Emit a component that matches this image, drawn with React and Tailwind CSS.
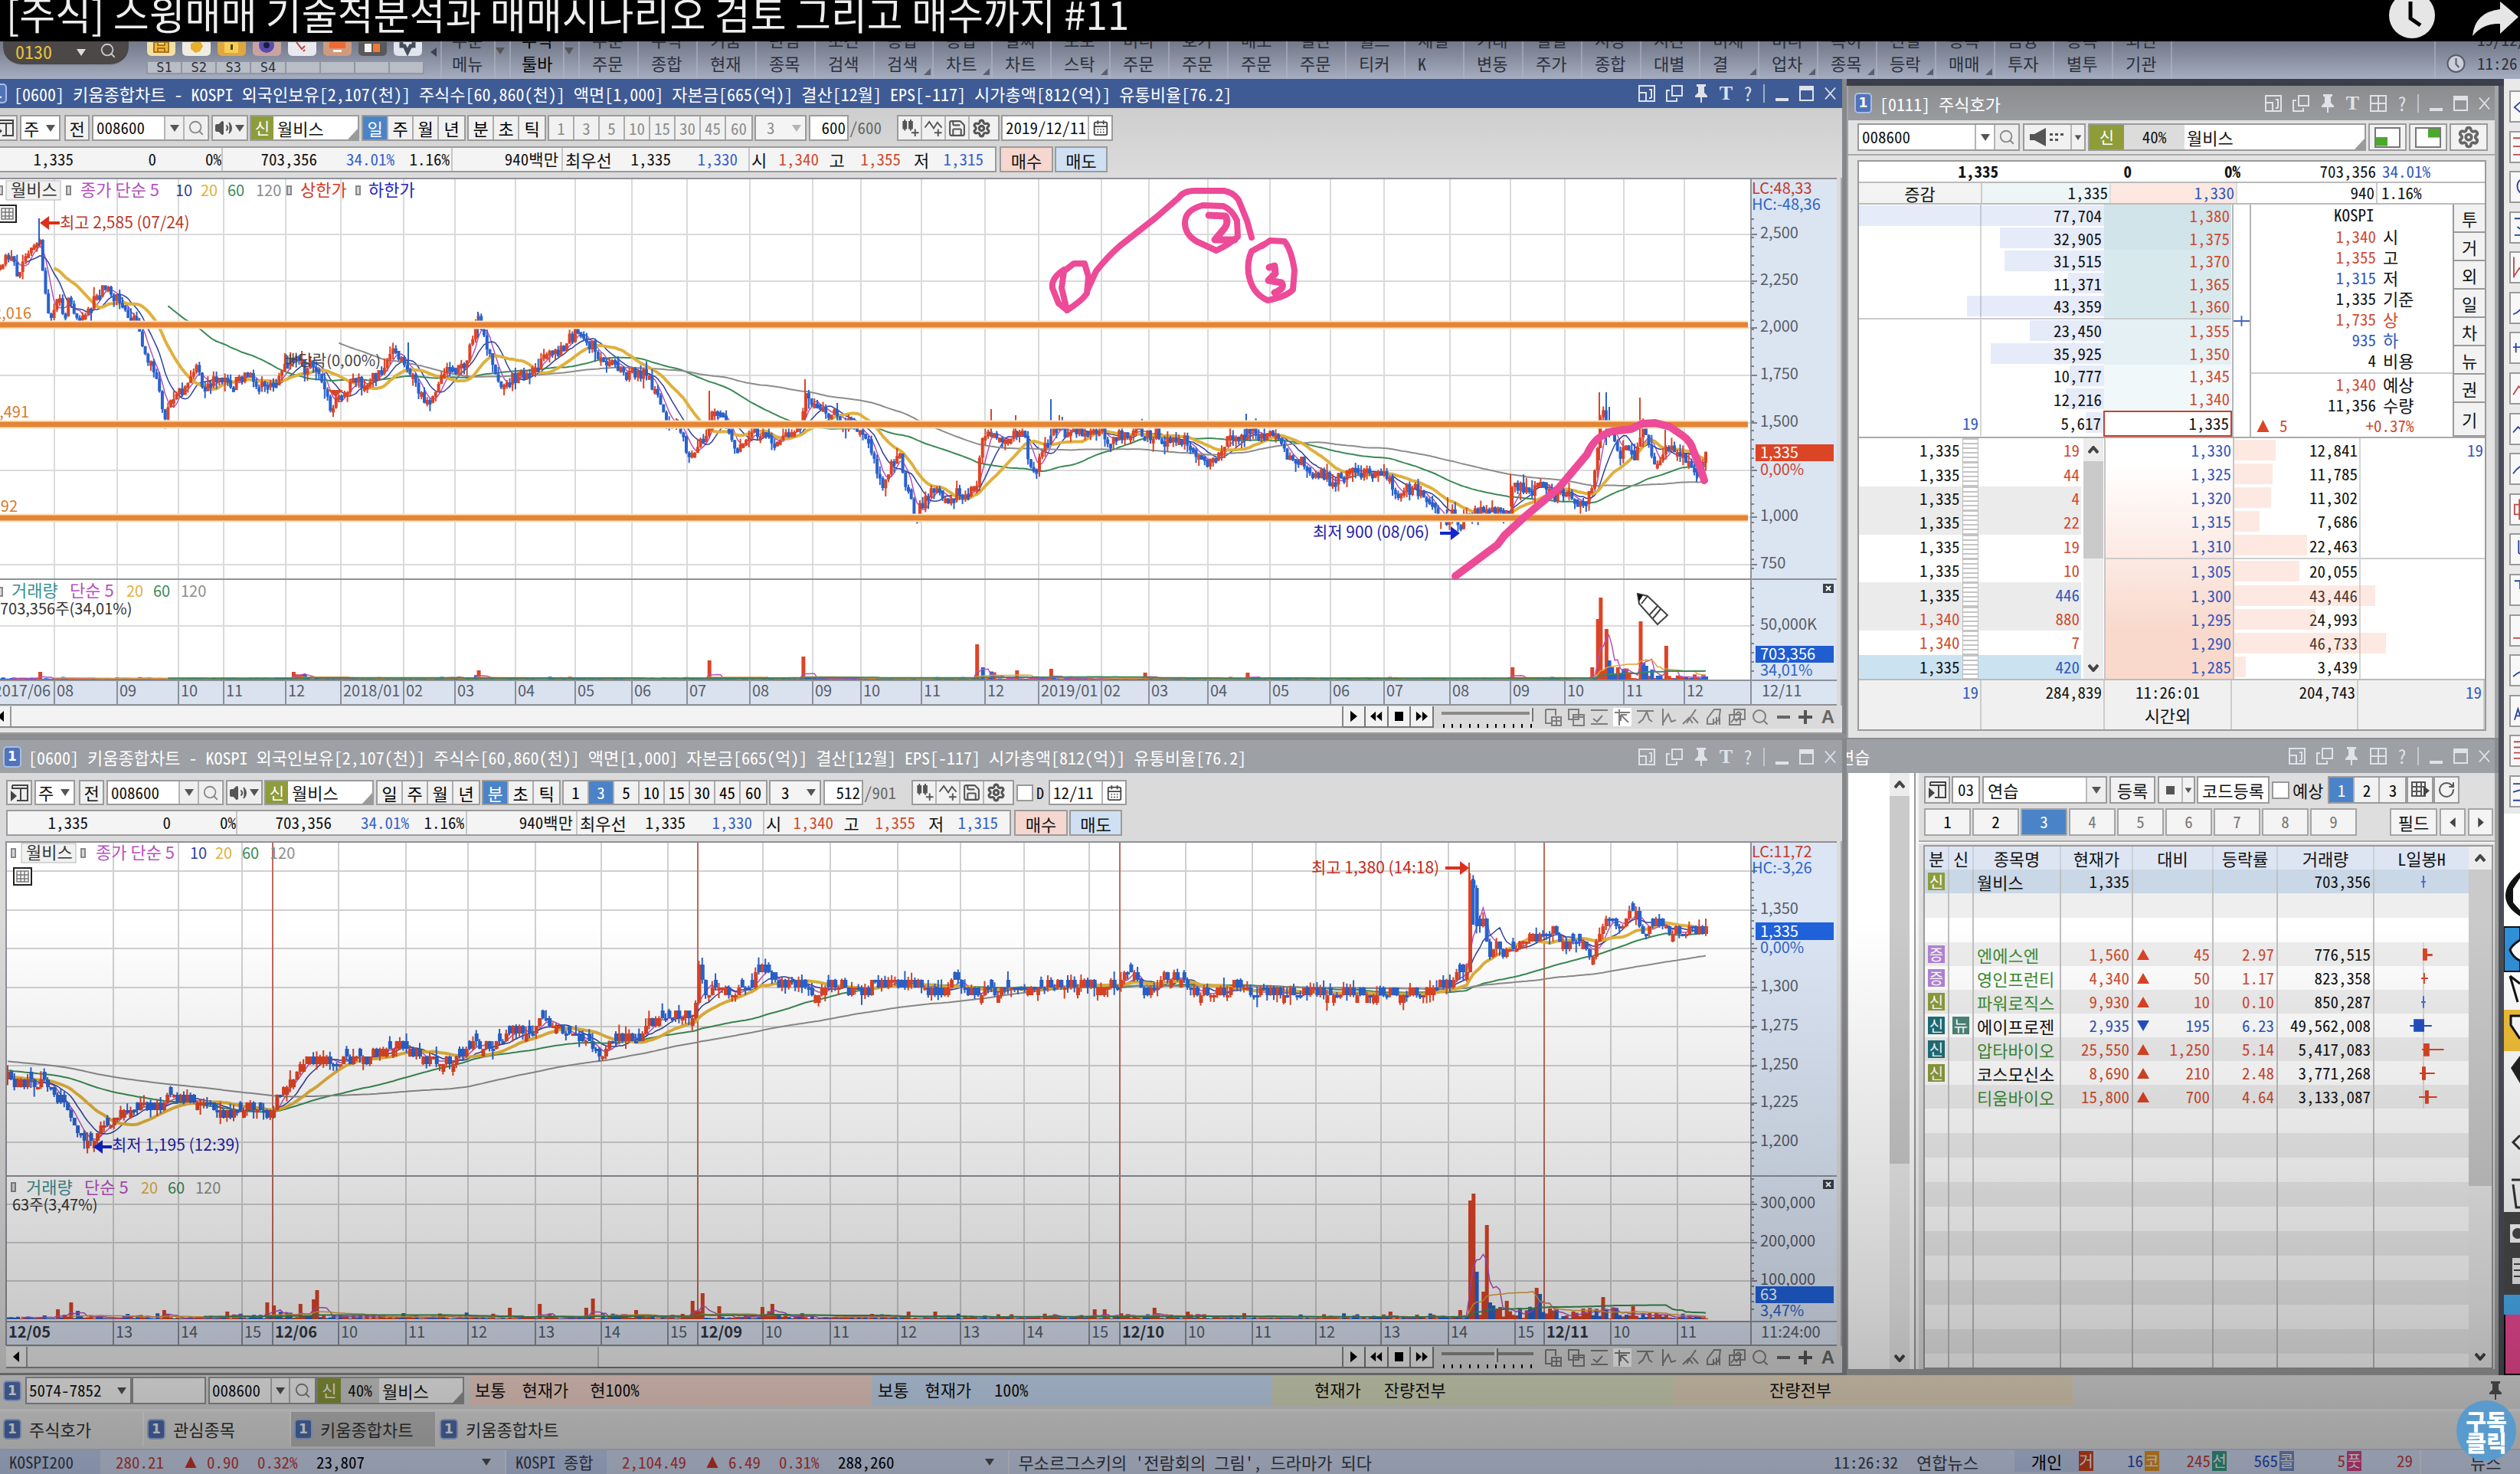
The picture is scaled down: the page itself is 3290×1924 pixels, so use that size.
import React from "react";
import { Search, Settings, Save, CalendarDays, RotateCw, Volume2 } from "lucide-react";

const MONO = "font-['Noto_Sans_Mono_CJK_KR','Noto_Sans_CJK_KR',monospace]";
const RED = "#dc4426";
const BLUE = "#2a62cc";

/* ---------- series helpers ---------- */

function rng(seed) {
  let s = seed;
  return () => {
    s = (s * 1664525 + 1013904223) % 4294967296;
    return s / 4294967296;
  };
}

function parse(str) {
  return str.trim().split(/\s+/).map((p) => p.split(",").map(Number));
}

function sample(points, x) {
  for (let i = 1; i < points.length; i++) {
    if (x <= points[i][0]) {
      const [x0, y0] = points[i - 1];
      const [x1, y1] = points[i];
      return y0 + ((y1 - y0) * (x - x0)) / (x1 - x0 || 1);
    }
  }
  return points[points.length - 1][1];
}

function average(values, n, i) {
  let sum = 0;
  for (let k = i - n + 1; k <= i; k++) sum += values[k];
  return sum / n;
}

function averageLine(values, n, lead, xs) {
  let d = "";
  for (let i = lead; i < values.length; i++) {
    if (i < n - 1) continue;
    d += (d ? "L" : "M") + xs(i - lead).toFixed(1) + " " + average(values, n, i).toFixed(1);
  }
  return d;
}

function buildPrice({ path, count, x0, x1, seed, noise, wick, tick, base, history }) {
  const pts = parse(path);
  const r = rng(seed);
  const step = (x1 - x0) / (count - 1);
  const xs = (i) => x0 + i * step;
  const snap = (y) => (tick ? base + Math.round((y - base) / tick) * tick : y);
  const closes = history.slice();
  const out = { redBody: "", blueBody: "", redWick: "", blueWick: "" };
  let prev = snap(sample(pts, x0));
  for (let i = 0; i < count; i++) {
    const x = xs(i);
    const close = snap(sample(pts, x) + (r() - 0.5) * noise);
    const up = close === prev ? r() > 0.5 : close < prev;
    let open = prev;
    if (tick && close === prev && r() > 0.45) open = up ? close + tick : close - tick;
    const top = Math.min(open, close);
    const h = Math.max(Math.abs(open - close), tick ? 3 : 6);
    const hi = top - r() * r() * wick;
    const lo = top + h + r() * r() * wick;
    out[up ? "redBody" : "blueBody"] += `M${(x - 2).toFixed(1)} ${top.toFixed(1)}h${tick ? 5 : 4}v${h.toFixed(1)}h-${tick ? 5 : 4}z`;
    out[up ? "redWick" : "blueWick"] += `M${x.toFixed(1)} ${hi.toFixed(1)}V${lo.toFixed(1)}`;
    closes.push(close);
    prev = close;
  }
  const lead = history.length;
  out.ma = (n) => averageLine(closes, n, lead, xs);
  return out;
}

function buildVolume({ count, x0, x1, seed, floor, small, peaks, busy }) {
  const r = rng(seed);
  const step = (x1 - x0) / (count - 1);
  const xs = (i) => x0 + i * step;
  const hs = [];
  let red = "";
  let blue = "";
  for (let i = 0; i < count; i++) {
    const x = xs(i);
    let h = r() * r() * small + 1;
    let isRed = r() > 0.5;
    busy.forEach(([a, b, m]) => {
      if (x >= a && x <= b) h = Math.max(h, r() * m);
    });
    peaks.forEach(([px, top, c]) => {
      if (Math.abs(px - x) <= step / 2) {
        h = floor - top;
        isRed = c !== "b";
      }
    });
    hs.push(floor - h);
    const bar = `M${(x - 2).toFixed(1)} ${floor}h5v${(-h).toFixed(1)}h-5z`;
    if (isRed) red += bar;
    else blue += bar;
  }
  return { red, blue, ma: (n) => averageLine(hs, n, 0, xs) };
}

/* ---------- chart data ---------- */

const DAILY = buildPrice({
  path: `0,350 8,325 22,355 40,330 48,318 51,302 54,345 60,390 68,415 75,385 85,410 92,385 102,420 115,400 125,390 137,375 150,385
  160,400 170,410 180,420 188,455 200,475 205,490 210,520 216,545 222,520 232,515 240,510 248,495 255,475 262,495 270,505 280,492
  290,495 305,500 320,485 335,500 350,505 365,490 380,470 388,455 398,480 410,470 420,490 430,530 440,520 450,505 465,495 480,500
  490,490 500,480 510,460 525,465 535,480 545,510 555,520 562,528 570,500 580,485 590,475 600,485 610,470 618,430 624,412 632,440
  640,470 650,500 655,508 665,495 680,490 700,475 715,465 730,455 745,440 757,432 765,450 775,445 785,470 800,475 815,490 830,485
  845,490 855,505 862,530 870,545 880,550 890,560 897,585 905,597 912,582 920,575 926,550 932,530 940,535 950,560 960,585 970,572
  980,568 990,560 1000,565 1010,575 1018,580 1025,565 1040,560 1047,550 1051,515 1060,530 1075,535 1090,540 1105,550 1115,560
  1125,555 1135,580 1145,610 1152,635 1160,615 1175,592 1185,640 1195,678 1200,665 1210,645 1220,635 1230,645 1238,650 1250,640
  1270,640 1277,625 1280,580 1290,562 1300,570 1312,580 1325,565 1335,562 1342,590 1350,618 1360,595 1370,570 1380,555 1395,565
  1410,560 1425,565 1435,560 1450,575 1470,565 1490,560 1500,570 1510,560 1520,575 1540,570 1555,580 1565,598 1577,602 1590,590
  1605,565 1620,570 1635,560 1650,570 1662,560 1672,570 1680,595 1690,590 1700,605 1715,620 1730,620 1740,630 1750,620 1760,615
  1775,617 1790,615 1805,620 1820,635 1835,640 1843,635 1855,645 1868,650 1878,668 1888,682 1895,668 1905,690 1912,675 1925,668
  1940,662 1955,665 1970,668 1975,635 1985,635 2000,640 2015,635 2030,645 2050,645 2062,658 2075,645 2080,640 2085,590 2090,540
  2098,545 2105,565 2115,595 2125,580 2135,600 2145,550 2155,590 2165,605 2175,590 2185,580 2195,595 2205,600 2213,622 2220,612 2227,590`,
  count: 600, x0: 0, x1: 2227, seed: 11, noise: 17, wick: 14, tick: 0, base: 0, history: [],
});

const DAILY_VOL = buildVolume({
  count: 600, x0: 0, x1: 2227, seed: 5, floor: 886, small: 3,
  peaks: [[51, 876], [384, 876], [624, 874], [925, 861], [1050, 856], [1277, 840], [1283, 870, "b"], [1326, 874], [1372, 872], [1495, 877],
    [1627, 877], [1973, 870], [2080, 870], [2084, 807], [2088, 779], [2097, 820], [2101, 861, "b"], [2112, 870], [2141, 810], [2145, 864, "b"], [2148, 868, "b"], [2174, 842]],
  busy: [[380, 400, 7], [612, 632, 7], [1277, 1300, 14], [2085, 2130, 16], [2140, 2160, 16], [2160, 2227, 7]],
});

const lead = Array.from({ length: 120 }, (_, i) => 1362 + (i * 48) / 119);

const MINUTE = buildPrice({
  path: `8,1404 23,1413 61,1416 73,1430 88,1445 96,1467 107,1482 121,1492 126,1485 134,1467 149,1469 165,1445 180,1441 207,1446 218,1435
  256,1437 268,1447 298,1456 314,1443 341,1448 356,1456 361,1430 375,1417 386,1397 398,1385 417,1382 436,1397 448,1385 482,1384
  505,1367 528,1367 540,1378 551,1382 574,1384 605,1378 616,1363 650,1367 662,1348 689,1348 712,1334 723,1345 746,1348 765,1358
  780,1378 792,1374 807,1355 834,1356 846,1334 865,1330 891,1330 907,1320 911,1256 917,1280 922,1300 934,1289 957,1295 980,1289
  995,1267 1004,1272 1014,1286 1033,1284 1064,1295 1087,1282 1125,1298 1148,1284 1194,1286 1219,1298 1246,1286 1293,1298 1316,1286
  1354,1293 1385,1286 1431,1286 1458,1287 1470,1274 1482,1276 1493,1298 1509,1289 1524,1274 1536,1276 1551,1289 1586,1298 1617,1288
  1648,1298 1694,1296 1748,1299 1817,1297 1860,1296 1879,1284 1898,1286 1906,1271 1915,1272 1917,1150 1923,1155 1928,1215 1938,1200
  1943,1252 1952,1230 1964,1245 1979,1237 1995,1223 2018,1221 2027,1212 2037,1226 2049,1237 2060,1223 2076,1249 2087,1223 2095,1195
  2107,1208 2118,1219 2126,1197 2134,1182 2140,1208 2147,1219 2157,1204 2168,1215 2222,1213 2227,1216`,
  count: 512, x0: 10, x1: 2227, seed: 29, noise: 12, wick: 14, tick: 10, base: 1290, history: lead,
});

const MINUTE_VOL = buildVolume({
  count: 512, x0: 10, x1: 2227, seed: 17, floor: 1723, small: 8,
  peaks: [[75, 1710], [93, 1701], [100, 1712, "b"], [214, 1711], [295, 1713], [348, 1701], [356, 1705], [392, 1703], [408, 1697], [413, 1685], [666, 1708],
    [704, 1703], [765, 1708], [774, 1696], [830, 1711], [903, 1699], [915, 1689], [939, 1706], [995, 1707], [1006, 1703], [1186, 1713], [1220, 1713],
    [1429, 1710], [1441, 1710], [1505, 1708], [1549, 1713], [1622, 1715], [1813, 1713], [1848, 1717], [1904, 1711], [1918, 1568], [1922, 1559],
    [1927, 1661, "b"], [1936, 1687], [1939, 1600], [1945, 1701, "b"], [1949, 1705, "b"], [1966, 1699], [2004, 1682], [2009, 1690, "b"], [2091, 1694], [2130, 1706]],
  busy: [[355, 385, 14], [905, 925, 14], [1000, 1025, 14], [1455, 1475, 10], [1930, 1960, 26], [1960, 2110, 19], [2110, 2200, 9]],
});

const D_GRID = [
  [71, "08"], [153, "09"], [233, "10"], [292, "11"], [373, "12"], [445, "2018/01"], [527, "02"], [594, "03"], [673, "04"], [751, "05"],
  [825, "06"], [897, "07"], [979, "08"], [1061, "09"], [1124, "10"], [1203, "11"], [1286, "12"], [1356, "2019/01"], [1438, "02"],
  [1500, "03"], [1577, "04"], [1658, "05"], [1737, "06"], [1807, "07"], [1893, "08"], [1972, "09"], [2043, "10"], [2120, "11"], [2199, "12"],
];
const M_GRID = [
  [8, "12/05", 2], [148, "13"], [233, "14"], [316, "15"], [356, "12/06", 1], [442, "10"], [530, "11"], [611, "12"], [699, "13"], [785, "14"],
  [872, "15"], [911, "12/09", 1], [996, "10"], [1084, "11"], [1172, "12"], [1254, "13"], [1337, "14"], [1422, "15"], [1462, "12/10", 1],
  [1548, "10"], [1635, "11"], [1718, "12"], [1803, "13"], [1891, "14"], [1978, "15"], [2016, "12/11", 1], [2103, "10"], [2190, "11"],
];

const AXIS = "#565c66";

function Averages({ src }) {
  return (
    <g fill="none">
      <path d={src.ma(5)} stroke="#b64fc0" strokeWidth="1.5" />
      <path d={src.ma(10)} stroke="#2e3f97" strokeWidth="1.5" />
      <path d={src.ma(60)} stroke="#3b8a55" strokeWidth="2" />
      <path d={src.ma(120)} stroke="#8c8c8c" strokeWidth="2" />
      <path d={src.ma(20)} stroke="#e0b03c" strokeWidth="4" />
    </g>
  );
}

function Candles({ src }) {
  return (
    <g>
      <path d={src.redWick} stroke={RED} strokeWidth="2" />
      <path d={src.blueWick} stroke={BLUE} strokeWidth="2" />
      <path d={src.redBody} fill={RED} />
      <path d={src.blueBody} fill={BLUE} />
    </g>
  );
}

function VolumeBars({ src }) {
  return (
    <g>
      <path d={src.red} fill={RED} />
      <path d={src.blue} fill={BLUE} />
      <g fill="none" strokeWidth="1.5">
        <path d={src.ma(5)} stroke="#b64fc0" />
        <path d={src.ma(20)} stroke="#e0a03c" />
        <path d={src.ma(60)} stroke="#3b8a55" strokeWidth="2" />
      </g>
    </g>
  );
}

function YTicks({ from, to, step }) {
  const d = [];
  for (let y = from; y < to; y += step) d.push(`M2286 ${y}h4`);
  return <path d={d.join("")} stroke="#7c828c" strokeWidth="2" />;
}

function Legend({ y, items }) {
  return items.map(([x, t, c]) => (
    <text key={x} x={x} y={y} fill={c} className={/[가-힣]/.test(t) ? "text-[22px]" : "text-[20px]"}>{t}</text>
  ));
}

function TinyMark({ x, y }) {
  return <rect x={x} y={y} width="5" height="11" fill="#d8d8d8" stroke="#888" strokeWidth="2" />;
}

function GridButton({ x, y }) {
  return (
    <g>
      <rect x={x} y={y} width="23" height="22" fill="#fff" stroke="#222" strokeWidth="2" />
      <path d={`M${x + 4} ${y + 4}h15v14h-15zM${x + 4} ${y + 9}h15M${x + 4} ${y + 14}h15M${x + 9} ${y + 4}v14M${x + 14} ${y + 4}v14`} fill="none" stroke="#777" strokeWidth="1.5" />
    </g>
  );
}

function CloseMark({ y }) {
  return (
    <g>
      <rect x="2380" y={y} width="14" height="12" fill="#3a3f48" />
      <path d={`M2384 ${y + 3}l6 6m0-6l-6 6`} stroke="#fff" strokeWidth="2" />
    </g>
  );
}

const CHART_TEXT = "block h-auto w-full text-[20px] font-['Noto_Sans_CJK_KR',sans-serif]";

function DailyChart() {
  const hs = [[305, "2,500"], [366, "2,250"], [427, "2,000"], [489, "1,750"], [551, "1,500"], [613, ""], [674, "1,000"], [736, "750"]];
  return (
    <svg viewBox="0 231 2398 689" className={CHART_TEXT} role="img" aria-label="월비스 일봉 차트">
      <rect x="0" y="231" width="2286" height="656" fill="#fff" />
      <rect x="2286" y="231" width="112" height="688" fill="#dbe4f1" />
      <rect x="0" y="887" width="2286" height="32" fill="#dae2ef" />
      <path d={D_GRID.map(([x]) => `M${x} 232V887`).join("") + hs.map(([y]) => `M0 ${y}H2285`).join("") + "M0 816H2285"} stroke="#dadada" strokeWidth="2" />
      <path d={D_GRID.map(([x]) => `M${x} 887V919`).join("")} stroke="#8b909a" strokeWidth="2" />
      <Averages src={DAILY} />
      <Candles src={DAILY} />
      <g strokeWidth="2">
        <path d="M1051 494V560M926 509V560M1294 533V570M1326 541V570M2088 511V600M2141 518V580M1972 618V660M2174 560V590M1890 648V668M883 545V560" stroke={RED} />
        <path d="M51 284V320M1372 520V580M1627 539V570M2097 511V580M2101 530V570M624 406V440M533 446V480M2215 610V628" stroke={BLUE} />
      </g>
      <path d="M0 423H2282M0 553H2282M0 675H2282" stroke="#fbe3bd" strokeWidth="11" />
      <path d="M0 423H2282M0 553H2282M0 675H2282" stroke="#e58435" strokeWidth="7" />
      <VolumeBars src={DAILY_VOL} />
      <path d="M0 232H2398M0 755H2398M0 887H2398M0 919H2398M2286 231V919" stroke="#8e9198" strokeWidth="2" fill="none" />
      <YTicks from={285} to={750} step={12} />
      <YTicks from={767} to={880} step={12} />
      <g fill={AXIS}>
        {hs.map(([y, t]) => (
          <text key={y} x="2298" y={y + 5}>{t}</text>
        ))}
        <path d={hs.map(([y]) => `M2286 ${y}h8`).join("")} stroke="#7c828c" strokeWidth="2" />
        <text x="2298" y="821">50,000K</text>
        {D_GRID.map(([x, t]) => (
          <text key={x} x={x + 3} y="908">{t}</text>
        ))}
        <text x="66" y="908" textAnchor="end">2017/06</text>
        <text x="2300" y="908">12/11</text>
      </g>
      <text x="2287" y="252" fill="#c23a2b">LC:48,33</text>
      <text x="2287" y="273" fill="#2f64c4">HC:-48,36</text>
      <rect x="2292" y="579" width="102" height="22" fill="#dc4426" />
      <text x="2298" y="597" fill="#fff">1,335</text>
      <text x="2298" y="619" fill="#c9432f">0,00%</text>
      <rect x="2292" y="842" width="102" height="22" fill="#1f5dd0" />
      <text x="2298" y="860" fill="#fff">703,356</text>
      <text x="2298" y="881" fill="#2f64c4">34,01%</text>
      <CloseMark y={761} />
      <rect x="8" y="235" width="71" height="25" fill="#f1f1f1" stroke="#b5b5b5" />
      <Legend y={255} items={[[14, "월비스", "#333"], [105, "종가 단순 5", "#b64fc0"], [229, "10", "#2e3f97"], [262, "20", "#e0b03c"], [297, "60", "#3b8a55"], [334, "120", "#8c8c8c"], [392, "상한가", "#d23a28"], [481, "하한가", "#2626b8"]]} />
      <TinyMark x={-2} y={242} />
      <TinyMark x={87} y={242} />
      <TinyMark x={375} y={242} />
      <TinyMark x={465} y={242} />
      <GridButton x={-2} y={267} />
      <path d="M52 290l12-9v7h14v4h-14v7z" fill="#dc2f1c" />
      <text x="78" y="297" fill="#b8392c" className="text-[21px]">최고 2,585 (07/24)</text>
      <text x="1714" y="701" fill="#2020b0" className="text-[21px]">최저 900 (08/06)</text>
      <path d="M1906 695l-12-9v7h-14v4h14v7z" fill="#1226cc" />
      <text x="371" y="477" fill="#444">배당락(0,00%)</text>
      <path d="M428 508h20l-10 9z" fill={RED} />
      <g fill="#d9792e">
        <text x="41" y="415" textAnchor="end">2,016</text>
        <text x="38" y="544" textAnchor="end">1,491</text>
        <text x="23" y="667" textAnchor="end">992</text>
      </g>
      <Legend y={778} items={[[15, "거래량", "#3a8f96"], [91, "단순 5", "#b64fc0"], [165, "20", "#e0b03c"], [200, "60", "#3b8a55"], [236, "120", "#8c8c8c"]]} />
      <TinyMark x={-2} y={766} />
      <text x="0" y="801" fill="#333">703,356주(34,01%)</text>
      <g fill="none" stroke="#ed4a97" strokeWidth="8" strokeLinecap="round" strokeLinejoin="round">
        <path d="M1389 351Q1372 362 1374 375L1382 395L1393 404Q1412 392 1419 382L1421 360L1416 343L1402 343L1389 353L1386 375L1393 404" />
        <path d="M1420 377L1431 353Q1445 335 1462 320L1509 283L1539 257Q1545 248 1560 248L1598 248Q1610 250 1617 260L1628 287L1634 309" />
        <path d="M1597 268L1570 267Q1547 273 1547 290Q1547 305 1562 314L1588 326Q1605 318 1616 308L1615 287Q1608 272 1597 268" />
        <path d="M1578 280L1600 281Q1605 290 1597 299L1586 312L1612 312" strokeWidth="9" />
        <path d="M1650 318L1634 327Q1628 340 1630 356Q1634 382 1655 391Q1680 386 1688 377L1690 352Q1686 325 1677 314L1658 313L1648 320" />
        <path d="M1657 348L1664 346L1665 356L1656 365L1673 368Q1678 376 1664 381" strokeWidth="9" />
        <path d="M1900 751L1927 731L1955 710L1964 698L1990 674L2035 636L2072 592Q2082 568 2105 562L2130 559L2144 552L2161 551L2180 556L2196 567Q2208 575 2211 588L2219 607L2225 626" strokeWidth="10" />
      </g>
      <path d="M2138 774l13 3l26 25l-13 12l-24-27zM2151 777l-8 10M2164 790l-10 11M2168 794l-10 12M2177 802l-13 12" fill="#fff" stroke="#444" strokeWidth="2" />
      <path d="M2138 774l7 2l-5 8z" fill="#111" />
    </svg>
  );
}

function MinuteChart() {
  const hs = [[1138, ""], [1189, "1,350"], [1239, ""], [1290, "1,300"], [1341, "1,275"], [1392, "1,250"], [1441, "1,225"], [1492, "1,200"]];
  const vs = [[1573, "300,000"], [1623, "200,000"], [1673, "100,000"]];
  return (
    <svg viewBox="0 1099 2398 659" className={CHART_TEXT} role="img" aria-label="월비스 3분봉 차트">
      <rect x="8" y="1099" width="2278" height="627" fill="#fff" />
      <rect x="2286" y="1099" width="112" height="659" fill="#dbe5f4" />
      <rect x="8" y="1726" width="2278" height="32" fill="#dbe4f4" />
      <path
        d={M_GRID.filter((g) => !g[2]).map(([x]) => `M${x} 1100V1726`).join("") + hs.concat(vs).map(([y]) => `M8 ${y}H2285`).join("")}
        stroke="#d0d0d0" strokeWidth="2" />
      <path d={M_GRID.map(([x]) => `M${x} 1726V1757`).join("")} stroke="#8b909a" strokeWidth="2" />
      <path d={M_GRID.filter((g) => g[2] === 1).map(([x]) => `M${x} 1100V1723`).join("")} stroke="#bf6a5c" strokeWidth="2" />
      <Averages src={MINUTE} />
      <Candles src={MINUTE} />
      <path d="M1918 1127V1160" stroke={RED} strokeWidth="2" />
      <path d="M1921 1148h4v60h-4z" fill={BLUE} />
      <VolumeBars src={MINUTE_VOL} />
      <path d="M8 1757V1100H2398M8 1536H2398M8 1726H2398M8 1757H2398M2286 1100V1757" stroke="#8e9198" strokeWidth="2" fill="none" />
      <YTicks from={1153} to={1530} step={10} />
      <YTicks from={1540} to={1720} step={10} />
      <g fill={AXIS}>
        {hs.map(([y, t]) => (
          <text key={y} x="2298" y={y + 5}>{t}</text>
        ))}
        {vs.map(([y, t]) => (
          <text key={y} x="2298" y={y + 5}>{t}</text>
        ))}
        <path d={hs.concat(vs).map(([y]) => `M2286 ${y}h8`).join("")} stroke="#7c828c" strokeWidth="2" />
        {M_GRID.map(([x, t, b]) => (
          <text key={x} x={x + 3} y="1747" className={b ? "font-bold" : "font-normal"} fill={b ? "#33373f" : AXIS}>{t}</text>
        ))}
        <text x="2299" y="1747">11:24:00</text>
      </g>
      <text x="2287" y="1120" fill="#c23a2b">LC:11,72</text>
      <text x="2287" y="1141" fill="#2f64c4">HC:-3,26</text>
      <rect x="2292" y="1205" width="102" height="23" fill="#1f62da" />
      <text x="2298" y="1224" fill="#fff">1,335</text>
      <text x="2298" y="1245" fill="#2f64c4">0,00%</text>
      <rect x="2292" y="1680" width="102" height="22" fill="#1f62da" />
      <text x="2298" y="1698" fill="#fff">63</text>
      <text x="2298" y="1719" fill="#2f64c4">3,47%</text>
      <CloseMark y={1541} />
      <rect x="28" y="1102" width="71" height="25" fill="#f1f1f1" stroke="#b5b5b5" />
      <Legend y={1122} items={[[34, "월비스", "#333"], [125, "종가 단순 5", "#b64fc0"], [248, "10", "#2e3f97"], [281, "20", "#e0b03c"], [316, "60", "#3b8a55"], [352, "120", "#8c8c8c"]]} />
      <TinyMark x={15} y={1109} />
      <TinyMark x={106} y={1109} />
      <GridButton x={18} y={1134} />
      <path d="M1918 1134l-12-9v7h-19v4h19v7z" fill="#dc2f1c" />
      <text x="1712" y="1141" fill="#c22a1c" className="text-[21px]">최고 1,380 (14:18)</text>
      <text x="146" y="1503" fill="#2020b0" className="text-[21px]">최저 1,195 (12:39)</text>
      <path d="M122 1498l12-9v7h12v4h-12v7z" fill="#1226cc" />
      <Legend y={1559} items={[[34, "거래량", "#3a8f96"], [110, "단순 5", "#b64fc0"], [184, "20", "#e0b03c"], [219, "60", "#3b8a55"], [255, "120", "#8c8c8c"]]} />
      <TinyMark x={15} y={1545} />
      <text x="16" y="1581" fill="#333">63주(3,47%)</text>
    </svg>
  );
}

/* ---------- small shared parts ---------- */

function Tri({ className = "" }) {
  return (
    <svg viewBox="0 0 12 9" className={"h-[9px] w-[12px] shrink-0 " + className}>
      <path d="M0 0h12l-6 9z" fill="#555" />
    </svg>
  );
}

function Corner() {
  return <span className="ml-auto h-0 w-0 self-end border-b-[14px] border-l-[13px] border-b-[#9a9a9a] border-l-transparent" />;
}

function Badge({ className = "" }) {
  return (
    <span className={"flex shrink-0 items-center justify-center rounded-[5px] border-2 border-[#a8bde8] bg-[#5173b8] font-['DejaVu_Sans',sans-serif] text-[17px] font-bold leading-none text-white " + className}>1</span>
  );
}

function Pin({ fill = "#d9dde6" }) {
  return (
    <svg viewBox="0 0 20 26" className="h-[26px] w-[20px]">
      <path d="M4 1h12v3h-2v8l4 4v2h-7v7h-2v-7H2v-2l4-4V4H4z" fill={fill} />
    </svg>
  );
}

function WinIcons({ t, grid }) {
  const c = "shrink-0 cursor-pointer";
  return (
    <div className="flex shrink-0 items-center gap-[14px] text-[#dfe2e8]">
      <button aria-label="크기" className={c}>
        <svg viewBox="0 0 22 22" className="h-[22px] w-[22px]" fill="none" stroke="currentColor" strokeWidth="2"><path d="M1 1h20v20H1zM1 10h9v11M14 6h3v11M14 17h3" /></svg>
      </button>
      <button aria-label="복사" className={c}>
        <svg viewBox="0 0 22 22" className="h-[22px] w-[22px]" fill="none" stroke="currentColor" strokeWidth="2"><path d="M8 1h13v13H8zM5 7H1v14h13v-4" /></svg>
      </button>
      <button aria-label="고정" className={c}><Pin fill="#dfe2e8" /></button>
      {t && <button aria-label="글꼴" className={c + " font-['Liberation_Serif',serif] text-[26px] font-bold leading-none"}>T</button>}
      {grid && (
        <button aria-label="배열" className={c}>
          <svg viewBox="0 0 22 22" className="h-[22px] w-[22px]" fill="none" stroke="currentColor" strokeWidth="2"><path d="M1 1h20v20H1zM11 1v20M1 11h20" /></svg>
        </button>
      )}
      <button aria-label="도움말" className={c + " text-[24px] leading-none"}>?</button>
      <span className="h-[24px] w-[2px] bg-current opacity-60" />
      <button aria-label="최소화" className={c + " mt-[16px] h-[4px] w-[17px] bg-current"} />
      <button aria-label="최대화" className={c + " h-[20px] w-[19px] border-2 border-t-[6px] border-current"} />
      <button aria-label="닫기" className={c}>
        <svg viewBox="0 0 16 18" className="h-[18px] w-[15px]" stroke="currentColor" strokeWidth="2"><path d="M1 1l14 16M15 1L1 17" /></svg>
      </button>
    </div>
  );
}

function Box({ className = "", children }) {
  return <div className={"flex shrink-0 items-center border-2 border-[#9b9b9b] " + className}>{children}</div>;
}

function Seg({ items, active, off, width }) {
  return (
    <Box className="h-full divide-x-2 divide-[#ababab] bg-[#f1f1f1]">
      {items.map((t) => (
        <button
          key={t}
          className={width + " h-full text-center leading-none " + (t === active ? "bg-[#4b83c8] text-white" : off ? "text-[#8d8d8d]" : "text-black")}>
          {t}
        </button>
      ))}
    </Box>
  );
}

const TOOL = "flex w-[31px] shrink-0 items-center justify-center self-stretch";

function ChartToolbar({ unit, tick, count, total, date, daily }) {
  return (
    <div className={"flex items-stretch " + (daily ? "h-[34px]" : "h-[33px]")}>
      <Box className="w-[34px] justify-center bg-[#eee]">
        <svg viewBox="0 0 24 24" className="h-[24px] w-[24px]" fill="none" stroke="#444" strokeWidth="2"><path d="M3 2h20v20H9M3 2v5M3 6h20M14 6v16" /><path d="M1 9l8 7l-8 7z" fill="#444" stroke="none" /></svg>
      </Box>
      <Box className="ml-[3px] w-[53px] justify-between bg-white pl-[3px] pr-[5px] text-[22px]"><span>주</span><Tri /></Box>
      <Box className="ml-[5px] w-[33px] justify-center bg-[#f1f1f1] text-[22px]"><button>전</button></Box>
      <Box className="ml-[3px] w-[153px] bg-white">
        <input aria-label="종목코드" defaultValue="008600" className="w-[92px] min-w-0 bg-transparent pl-1 text-[21px] outline-none" />
        <span className="flex w-[25px] shrink-0 items-center justify-center self-stretch border-l-2 border-[#b5b5b5] bg-[#efefef]"><Tri /></span>
        <button aria-label="검색" className={TOOL + " border-l-2 border-[#b5b5b5] bg-[#efefef]"}><Search size={22} color="#8a8a8a" /></button>
      </Box>
      <Box className="ml-[3px] w-[48px] justify-between bg-[#efefef] pl-[2px] pr-[3px]"><Volume2 size={24} fill="#555" color="#555" /><Tri /></Box>
      <Box className="ml-[2px] w-[143px] bg-white">
        <span className="flex h-full w-[29px] items-center justify-center bg-[#8e9c3a] text-[21px] text-white">신</span>
        <span className="ml-[5px] text-[22px]">월비스</span>
        <Corner />
      </Box>
      <div className="ml-[3px] flex text-[22px]">
        <Seg items={["일", "주", "월", "년"]} active={unit} width="w-[33px]" />
        <div className="w-[2px]" />
        <Seg items={["분", "초", "틱"]} active={unit} width="w-[33px]" />
      </div>
      <div className="ml-[2px] flex text-[21px]">
        <Seg items={["1", "3", "5", "10", "15", "30", "45", "60"]} active={tick} off={daily} width="w-[33px]" />
      </div>
      <Box className={"ml-[2px] w-[68px] justify-between bg-[#f4f4f4] pl-[14px] pr-[5px] " + (daily ? "text-[#8d8d8d]" : "text-black")}><span>3</span><Tri className={daily ? "opacity-40" : ""} /></Box>
      <Box className="ml-[3px] w-[52px] bg-white">
        <input aria-label="조회 개수" defaultValue={count} className="w-full bg-transparent pr-[2px] text-right text-[21px] outline-none" />
      </Box>
      <span className="ml-[1px] flex w-[62px] items-center text-[21px] text-[#666]">/{total}</span>
      <Box className="w-[134px] divide-x-2 divide-[#b5b5b5] bg-[#f1f1f1] text-[#555]">
        <button aria-label="봉 추가" className={TOOL}>
          <svg viewBox="0 0 26 26" className="h-[25px] w-[26px]"><path d="M4 4h4v9H4zM12 4h4v9h-4zM6 1v15M14 1v15M20 14v10M15 19h10" fill="#666" stroke="#555" strokeWidth="2" /></svg>
        </button>
        <button aria-label="지표 추가" className={TOOL}>
          <svg viewBox="0 0 26 26" className="h-[25px] w-[26px]"><path d="M1 12l6-8l6 9l5-8l6 7M19 14v10M14 19h10" fill="none" stroke="#555" strokeWidth="2" /></svg>
        </button>
        <button aria-label="저장" className={TOOL}><Save size={25} /></button>
        <button aria-label="설정" className={TOOL}><Settings size={25} strokeWidth={3} /></button>
      </Box>
      {!daily && (
        <label className="ml-[3px] flex items-center gap-[4px] text-[20px]">
          <input type="checkbox" className="h-[22px] w-[22px] appearance-none border-2 border-[#999] bg-white" />D
        </label>
      )}
      <Box className={"bg-white " + (daily ? "ml-[2px] w-[146px]" : "ml-[6px] w-[102px]")}>
        <input aria-label="날짜" defaultValue={date} className="w-full min-w-0 bg-transparent pl-[4px] text-[21px] outline-none" />
        <button aria-label="달력" className={TOOL + " border-l-2 border-[#b5b5b5]"}><CalendarDays size={22} color="#444" /></button>
      </Box>
    </div>
  );
}

function InfoRow() {
  const sep = "border-r-2 border-[#c6c6c6]";
  const cells = [
    ["1,335", "w-[105px] justify-end"],
    ["0", "w-[108px] justify-end"],
    ["0%", "w-[87px] justify-end " + sep],
    ["703,356", "w-[123px] justify-end"],
    ["34.01%", "w-[101px] justify-end text-[#3760c6]"],
    ["1.16%", "w-[76px] justify-end pr-[2px] " + sep],
    ["940백만", "w-[144px] justify-end pr-[4px] " + sep],
    ["최우선", "w-[66px] pl-[3px] text-[22px]"],
    ["1,335", "w-[75px] justify-end"],
    ["1,330", "w-[103px] justify-end pr-[14px] text-[#3760c6] " + sep],
    ["시", "w-[30px] pl-[2px] text-[22px]"],
    ["1,340", "w-[60px] justify-end text-[#cf4a30]"],
    ["고", "w-[47px] justify-center text-[22px]"],
    ["1,355", "w-[60px] justify-end text-[#cf4a30]"],
    ["저", "w-[54px] justify-center text-[22px]"],
    ["1,315", "w-[54px] justify-end text-[#3760c6]"],
  ];
  return (
    <div className="flex h-[34px] items-stretch">
      <Box className="w-[1312px] bg-[#f4f4f4] text-[21px]">
        {cells.map(([t, c], i) => (
          <span key={i} className={"flex h-full shrink-0 items-center whitespace-nowrap " + c}>{t}</span>
        ))}
      </Box>
      <button className="ml-[4px] w-[70px] border-2 border-[#9b9b9b] bg-[#f5d7d0] text-[22px]">매수</button>
      <button className="ml-[2px] w-[69px] border-2 border-[#9b9b9b] bg-[#cfe0f2] text-[22px]">매도</button>
    </div>
  );
}

const TOOL_PATHS = [
  "M2 2h13v8M2 2v18h8M10 12h12v11H10zM16 12v11M10 17h12",
  "M2 2h13v13H2zM8 9h14v14H8zM8 12h14",
  "M1 3h22M1 21h22M4 14l5 4l7-8",
  "M2 6h20M8 2v21M10 9l10 10M10 9v8M10 9h8",
  "M1 4h22M3 20l6-5l5-10l3 10l4 3",
  "M5 1v22M5 20l7-12l4 10l6-2",
  "M1 21l8-8l5 7M6 20L18 2M14 12l7 8",
  "M3 14L12 2h8l-2 14l-8 5H3zM11 14v8M15 12v10M19 12v10",
  "M8 2h14v13H8zM2 9h14v13H2zM4 19l4-5l3 3l4-5M10 8l4-3l4 4",
];

function ChartFooter({ daily }) {
  const btn = "flex h-full w-[30px] items-center justify-center border-b-2 border-r-2 border-[#777] bg-[#f2f2f2]";
  return (
    <div className="flex h-[30px] items-center">
      <div className={"flex h-[28px] flex-1 items-stretch border-b-2 border-[#8b8b8b] " + (daily ? "bg-[#f3f3f3]" : "ml-[8px] bg-[#eeeeee]")}>
        <button aria-label="왼쪽" className={"flex items-center border-r-2 border-[#999] bg-[#f3f3f3] " + (daily ? "w-[15px]" : "w-[28px] justify-center")}>
          <svg viewBox="0 0 8 14" className={"h-[14px] w-[8px] " + (daily ? "-ml-[3px]" : "")}><path d="M8 0v14L0 7z" /></svg>
        </button>
        {!daily && <div className="ml-auto w-[972px] border-l-2 border-[#bbb] bg-[#f3f3f3] shadow-[0_2px_0_#777]" />}
      </div>
      <div className="flex h-[28px] w-[120px] border-l-2 border-[#888]">
        <button aria-label="재생" className={btn}><svg viewBox="0 0 10 16" className="h-[16px] w-[9px]"><path d="M0 0v16l10-8z" /></svg></button>
        <button aria-label="뒤로" className={btn}><svg viewBox="0 0 18 14" className="h-[14px] w-[16px]"><path d="M8 0v14L0 7zM17 0v14L9 7z" /></svg></button>
        <button aria-label="정지" className={btn}><span className="h-[12px] w-[11px] bg-black" /></button>
        <button aria-label="앞으로" className={btn}><svg viewBox="0 0 18 14" className="h-[14px] w-[16px]"><path d="M1 0v14l8-7zM10 0v14l8-7z" /></svg></button>
      </div>
      <div className="ml-[10px] flex w-[120px] flex-col gap-[2px]">
        <input
          type="range" aria-label="속도" defaultValue={daily ? 100 : 60}
          className="h-[20px] w-full appearance-none bg-[linear-gradient(#8a8a8a,#8a8a8a)] bg-[length:100%_4px] bg-[position:0_6px] bg-no-repeat [&::-webkit-slider-thumb]:h-[18px] [&::-webkit-slider-thumb]:w-[5px] [&::-webkit-slider-thumb]:appearance-none [&::-webkit-slider-thumb]:border-r-2 [&::-webkit-slider-thumb]:border-[#777] [&::-webkit-slider-thumb]:bg-[#e5e5e5]" />
        <div className="flex justify-between px-[2px]">
          {Array.from({ length: 11 }, (_, i) => <span key={i} className="h-[5px] w-[2px] bg-black" />)}
        </div>
      </div>
      <div className="ml-[14px] flex h-full items-center gap-[6px] text-[#7d7d7d]">
        {TOOL_PATHS.map((d, i) => (
          <button key={i} aria-label={"도구 " + (i + 1)} className={i === 3 ? "bg-white" : ""}>
            <svg viewBox="0 0 24 24" className="h-[24px] w-[24px]" fill="none" stroke="currentColor" strokeWidth="2"><path d={d} /></svg>
          </button>
        ))}
        <button aria-label="확대경"><Search size={24} /></button>
        <button aria-label="축소" className="ml-[4px] h-[4px] w-[17px] bg-[#666]" />
        <button aria-label="확대" className="ml-[4px]"><svg viewBox="0 0 20 20" className="h-[20px] w-[20px]" stroke="#555" strokeWidth="4"><path d="M10 1v18M1 10h18" /></svg></button>
        <button className="ml-[5px] mr-[10px] font-['Liberation_Sans',sans-serif] text-[24px] font-bold leading-none text-[#666]">A</button>
      </div>
    </div>
  );
}

const TITLE = "[0600] 키움종합차트 - KOSPI 외국인보유[2,107(천)] 주식수[60,860(천)] 액면[1,000] 자본금[665(억)] 결산[12월] EPS[-117] 시가총액[812(억)] 유통비율[76.2]";

function ChartWindow({ daily }) {
  return (
    <section className={"mr-[6px] overflow-hidden bg-[#dadada] " + (daily ? "" : "border-t-2 border-[#8a8c90]")}>
      <header className={"flex items-center pr-[8px] text-white " + (daily ? "h-[38px] bg-[#3f5b96]" : "h-[43px] bg-[#9da0a5]")}>
        <Badge className={daily ? "-ml-[15px] h-[26px] w-[24px]" : "ml-[4px] h-[28px] w-[24px]"} />
        <h2 className="ml-[9px] flex-1 whitespace-nowrap text-[22px] leading-none">{TITLE}</h2>
        <WinIcons t />
      </header>
      <div className={"flex flex-col pb-[7px] " + (daily ? "-ml-[11px] gap-[7px] bg-gradient-to-b from-[#cecece] to-[#dcdcdc] pt-[9px]" : "ml-[8px] gap-[6px] pt-[9px]")}>
        {daily ? (
          <ChartToolbar daily unit="일" count="600" total="600" date="2019/12/11" />
        ) : (
          <ChartToolbar unit="분" tick="3" count="512" total="901" date="12/11" />
        )}
        <InfoRow />
      </div>
      <div className="border-r-2 border-[#a9a9a9] pr-[5px]">{daily ? <DailyChart /> : <MinuteChart />}</div>
      <ChartFooter daily={daily} />
      <div className={daily ? "h-[7px] border-b-2 border-[#9a9a9a] bg-[#e6e6e6]" : "h-[5px]"} />
    </section>
  );
}

/* ---------- order book ---------- */

const ASKS = [
  [77704, "77,704", "1,380"], [32905, "32,905", "1,375"], [31515, "31,515", "1,370"], [11371, "11,371", "1,365"], [43359, "43,359", "1,360"],
  [23450, "23,450", "1,355"], [35925, "35,925", "1,350"], [10777, "10,777", "1,345"], [12216, "12,216", "1,340"], [5617, "5,617", "1,335"],
];
const BIDS = [
  [12841, "12,841", "1,330"], [11785, "11,785", "1,325"], [11302, "11,302", "1,320"], [7686, "7,686", "1,315"], [22463, "22,463", "1,310"],
  [20055, "20,055", "1,305"], [43446, "43,446", "1,300"], [24993, "24,993", "1,295"], [46733, "46,733", "1,290"], [3439, "3,439", "1,285"],
];
const TRADES = [
  ["1,335", "19", 1], ["1,335", "44", 1], ["1,335", "4", 1], ["1,335", "22", 1], ["1,335", "19", 1],
  ["1,335", "10", 1], ["1,335", "446", 0], ["1,340", "880", 1], ["1,340", "7", 1], ["1,335", "420", 0],
];
const STATS = [
  ["1,340", "시", "r"], ["1,355", "고", "r"], ["1,315", "저", "b"], ["1,335", "기준", "k"], ["1,735", "상", "R"], ["935", "하", "B"], ["4", "비용", "k"],
];
const vRed = "text-[#cf4a30]";
const vBlue = "text-[#3257bd]";

function Stat({ v, l, c }) {
  const red = c === "r" || c === "R";
  const blue = c === "b" || c === "B";
  return (
    <div className="flex h-[27px] items-center">
      <span className={"w-[163px] text-right " + (red ? vRed : blue ? vBlue : "")}>{v}</span>
      <span className={"ml-[9px] text-[22px] " + (c === "R" ? vRed : c === "B" ? vBlue : "")}>{l}</span>
    </div>
  );
}

function ScrollV({ width, thumb }) {
  return (
    <div className={"flex shrink-0 flex-col bg-[#ececec] " + width}>
      <svg viewBox="0 0 14 10" className="mx-auto my-[10px] h-[10px] w-[14px] shrink-0" fill="none" stroke="#444" strokeWidth="4"><path d="M1 9l6-7l6 7" /></svg>
      <div className={"shrink-0 bg-[#cacaca] " + thumb} />
      <svg viewBox="0 0 14 10" className="mx-auto mb-[9px] mt-auto h-[10px] w-[14px] shrink-0" fill="none" stroke="#444" strokeWidth="4"><path d="M1 1l6 7l6-7" /></svg>
    </div>
  );
}

function QuoteWindow() {
  return (
    <section className="border-t-[9px] border-[#3a3f4b]">
      <div className="mr-[7px] border-l-2 border-r-[5px] border-[#a4a5a8] bg-[#e2e2e2]">
        <header className="flex h-[45px] items-center bg-gradient-to-b from-[#8b8c8e] to-[#9a9b9e] pr-[6px] text-white">
          <Badge className="ml-[8px] h-[27px] w-[23px]" />
          <h2 className="ml-[10px] flex-1 text-[22px] leading-none">[0111] 주식호가</h2>
          <WinIcons t grid />
        </header>
        <div className="flex h-[46px] items-center border-b-2 border-[#aaa] py-[4px] pl-[12px] pr-[9px]">
          <Box className="h-[36px] w-[212px] bg-white">
            <input aria-label="종목코드" defaultValue="008600" className="min-w-0 flex-1 bg-transparent pl-[4px] text-[21px] outline-none" />
            <span className="flex w-[25px] items-center justify-center self-stretch border-l-2 border-[#b5b5b5]"><Tri /></span>
            <button aria-label="검색" className="flex w-[32px] items-center justify-center self-stretch border-l-2 border-[#b5b5b5] bg-[#eee]"><Search size={22} color="#888" /></button>
          </Box>
          <Box className="ml-[4px] h-[36px] w-[82px] justify-between bg-[#f1f1f1] pl-[6px]">
            <svg viewBox="0 0 46 24" className="h-[24px] w-[46px]" fill="#555"><path d="M1 8h6L22 0v24L7 16H1zM27 7h4v3h-4zM34 7h4v3h-4zM41 7h4v3h-4zM27 14h4v3h-4zM34 14h4v3h-4z" /></svg>
            <span className="flex w-[18px] items-center justify-center self-stretch border-l-2 border-[#b5b5b5]"><Tri className="scale-75" /></span>
          </Box>
          <Box className="ml-[3px] h-[36px] flex-1 bg-white">
            <span className="flex h-full w-[45px] items-center justify-center bg-[#8e9c3a] text-[21px] text-white">신</span>
            <span className="flex h-full w-[79px] items-center justify-center bg-[#dcdcdc]">40%</span>
            <span className="ml-[3px] text-[22px]">월비스</span>
            <Corner />
          </Box>
          {["bg-[linear-gradient(#4aa82c,#4aa82c)] bg-[length:50%_50%] bg-[position:0_100%] bg-no-repeat", "bg-[linear-gradient(#4aa82c,#4aa82c)] bg-[length:50%_50%] bg-[position:100%_0] bg-no-repeat"].map((g, i) => (
            <Box key={i} className="ml-[3px] h-[36px] w-[50px] justify-center bg-[#f2f2f2]">
              <button aria-label={"배치 " + (i + 1)} className={"h-[27px] w-[34px] border-2 border-[#777] bg-white " + g} />
            </Box>
          ))}
          <Box className="ml-[3px] h-[36px] w-[50px] justify-center bg-[#f2f2f2]"><button aria-label="설정"><Settings size={30} strokeWidth={3} color="#666" /></button></Box>
        </div>
        <div className="ml-[12px] mr-[11px] mt-[6px] border-2 border-[#9a9a9a] bg-white text-[21px]">
          <div className="flex h-[28px] items-center border-b-2 border-[#bbb]">
            <b className="w-[182px] text-right">1,335</b>
            <b className="w-[174px] text-right">0</b>
            <b className="w-[142px] text-right">0%</b>
            <span className="w-[177px] text-right">703,356</span>
            <span className={"ml-[8px] " + vBlue}>34.01%</span>
          </div>
          <div className="flex h-[28px] items-stretch border-b-2 border-[#bbb] [&>*]:flex [&>*]:items-center">
            <span className="w-[161px] justify-center border-r-2 border-[#ccc] bg-[#f3f3f3] text-[22px]">증감</span>
            <span className="w-[166px] justify-end bg-[#eef5f7] pr-[2px]">1,335</span>
            <span className={"w-[167px] justify-end border-x-2 border-[#ddd] bg-[#fce8e1] pr-[2px] " + vBlue}>1,330</span>
            <span className="w-[183px] justify-end border-r-2 border-[#ccc] pr-[2px]">940</span>
            <span className="pl-[5px]">1.16%</span>
          </div>
          <div className="flex h-[305px] border-b-2 border-[#aaa]">
            <table className="h-full w-[486px] shrink-0 table-fixed border-collapse">
              <colgroup><col className="w-[159px]" /><col className="w-[161px]" /><col className="w-[166px]" /></colgroup>
              <tbody>
                {ASKS.map(([n, q, p], i) => (
                  <tr key={p} className={i === 4 ? "border-b-2 border-[#ccc]" : ""}>
                    <td className={"border-r-2 border-[#d5d5d5] p-0 pr-[2px] text-right leading-none " + vBlue}>{i === 9 ? "19" : ""}</td>
                    <td className="relative p-0 text-right leading-none">
                      <span className="absolute right-0 top-[1px] h-[27px] bg-[#5a78dc]/15" style={{ width: Math.round(n * 0.00413) }} />
                      <span className="relative pr-[3px]">{q}</span>
                    </td>
                    <td className={"p-0 pr-[2px] text-right leading-none " + (i === 9 ? "border-2 border-[#c9402c] bg-white" : vRed + (i < 2 ? " bg-[#d0e4e9]" : i < 5 ? " bg-[#d8e9ed]" : i < 7 ? " bg-[#e4f0f3]" : " bg-[#f1f8fa]"))}>{p}</td>
                  </tr>
                ))}
              </tbody>
            </table>
            <div className="flex w-[25px] shrink-0 items-center justify-center border-x-2 border-[#b5b5b5]">
              <svg viewBox="0 0 22 14" className="h-[14px] w-[22px]" stroke="#4a63c0" strokeWidth="2"><path d="M0 7h22M11 0v14" /></svg>
            </div>
            <div className="flex flex-1 flex-col">
              <div className="flex h-[28px] items-center pl-[108px]">KOSPI</div>
              {STATS.map(([v, l, c]) => <Stat key={l} v={v} l={l} c={c} />)}
              <div className="mt-[2px] border-t-2 border-[#ccc]">
                <Stat v={<span className={vRed}>1,340</span>} l="예상" c="k" />
                <Stat v="11,356" l="수량" c="k" />
                <div className={"flex h-[27px] items-center pl-[7px] " + vRed}>
                  <svg viewBox="0 0 16 16" className="h-[16px] w-[17px]"><path d="M8 0l8 16H0z" fill={RED} /></svg>
                  <span className="ml-[13px]">5</span>
                  <span className="ml-[102px]">+0.37%</span>
                </div>
              </div>
            </div>
            <div className="flex w-[42px] shrink-0 flex-col border-l-2 border-[#999] text-[22px]">
              {["투", "거", "외", "일", "차", "뉴", "권", "기"].map((t) => (
                <button key={t} className={"w-full border-b-2 border-[#999] bg-[#f2f2f2] leading-none " + (t === "기" ? "flex-1 border-b-0" : "h-[37px]")}>{t}</button>
              ))}
            </div>
          </div>
          <div className="flex h-[316px] border-b-2 border-[#bbb]">
            <div className="flex w-[320px] shrink-0">
              <table className="h-full w-[290px] table-fixed border-collapse">
                <colgroup><col className="w-[135px]" /><col className="w-[20px]" /><col className="w-[135px]" /></colgroup>
                <tbody>
                  {TRADES.map(([p, q, up], i) => (
                    <tr key={i} className={i === 9 ? "bg-[#cbe3f1]" : i === 2 || i === 3 || i === 6 || i === 7 ? "bg-[#ebebeb]" : "bg-white"}>
                      <td className={"p-0 pr-[3px] text-right leading-none " + (p === "1,340" ? vRed : "")}>{p}</td>
                      <td className="border-x border-[#bbb] bg-white bg-[linear-gradient(#c4c4c4_2px,transparent_2px)] bg-[length:100%_6px] p-0" />
                      <td className={"p-0 pr-[2px] text-right leading-none " + (up ? vRed : vBlue)}>{q}</td>
                    </tr>
                  ))}
                </tbody>
              </table>
              <ScrollV width="ml-[3px] w-[26px]" thumb="h-[127px]" />
            </div>
            <table className="h-full flex-1 table-fixed border-collapse">
              <colgroup><col className="w-[168px]" /><col className="w-[165px]" /><col /></colgroup>
              <tbody className="bg-[linear-gradient(#fff_10%,#f9d9cc_80%)]">
                {BIDS.map(([n, q, p], i) => (
                  <tr key={p} className={i === 4 ? "border-b-2 border-[#ccc]" : ""}>
                    <td className={"border-x-2 border-[#c5c5c5] p-0 pr-[2px] text-right leading-none " + vBlue}>{p}</td>
                    <td className="relative border-r-2 border-[#d5d5d5] bg-white p-0 pr-[2px] text-right leading-none">
                      <span className="absolute left-0 top-[2px] z-10 h-[27px] bg-[#f6a68c]/25" style={{ width: Math.round(n * 0.00424) }} />
                      {q}
                    </td>
                    <td className={"bg-white p-0 pr-[2px] text-right leading-none " + vBlue}>{i === 0 ? "19" : ""}</td>
                  </tr>
                ))}
              </tbody>
            </table>
          </div>
          <div className="flex h-[64px] bg-[#f0f0f0] leading-[30px] [&>*]:border-r-2 [&>*]:border-[#ccc]">
            <span className={"w-[160px] pr-[2px] text-right " + vBlue}>19</span>
            <span className="w-[161px] pr-[2px] text-right">284,839</span>
            <span className="flex w-[166px] flex-col text-center">11:26:01<span className="text-[22px]">시간외</span></span>
            <span className="w-[165px] pr-[2px] text-right">204,743</span>
            <span className={"flex-1 border-r-0 pr-[2px] text-right " + vBlue}>19</span>
          </div>
        </div>
        <div className="h-[9px]" />
      </div>
    </section>
  );
}

/* ---------- watch list ---------- */

const OLIVE = "bg-[#8e9c3a]";
const PURPLE = "bg-[#b183d6]";
const TEAL = "bg-[#1f6f78]";
const WATCH = [
  [["신", OLIVE], "", "월비스", "k", "1,335", "", "", "", "703,356", "tiny"],
  null,
  null,
  [["증", PURPLE], "", "엔에스엔", "g", "1,560", "u", "45", "2.97", "776,515", "body"],
  [["증", PURPLE], "", "영인프런티", "g", "4,340", "u", "50", "1.17", "823,358", "cross"],
  [["신", OLIVE], "", "파워로직스", "g", "9,930", "u", "10", "0.10", "850,287", "tiny"],
  [["신", TEAL], "뉴", "에이프로젠", "k", "2,935", "d", "195", "6.23", "49,562,008", "down"],
  [["신", TEAL], "", "압타바이오", "g", "25,550", "u", "1,250", "5.14", "5,417,083", "long"],
  [["신", OLIVE], "", "코스모신소", "k", "8,690", "u", "210", "2.48", "3,771,268", "mid"],
  [null, "", "티움바이오", "g", "15,800", "u", "700", "4.64", "3,133,087", "mid2"],
];

function MiniCandle({ kind }) {
  const shapes = {
    tiny: <path d="M65 8v16M62 16h6" stroke="#4a6ed0" strokeWidth="2" />,
    body: <path d="M64 8h6v16h-6zM64 15h13v3H64z" fill={RED} />,
    cross: <path d="M66 9v14M62 16h9" stroke={RED} strokeWidth="2" />,
    down: <g fill="#2450c4"><path d="M52 7h14v17H52zM47 15h29v2H47z" /></g>,
    long: <path d="M65 8h8v17h-8zM63 15h29v2H63z" fill={RED} />,
    mid: <path d="M63 7h5v18h-5zM60 15h20v2H60z" fill={RED} />,
    mid2: <path d="M67 7h5v18h-5zM59 15h24v2H59z" fill={RED} />,
  };
  return (
    <svg viewBox="0 0 125 31" className="block h-[31px] w-full">
      <path d="M65 0v31" stroke="#ddd2d2" strokeWidth="2" />
      {shapes[kind]}
    </svg>
  );
}

function Tag({ t, bg }) {
  return <span className={"mx-auto flex h-[23px] w-[22px] items-center justify-center text-[20px] leading-none text-white " + bg}>{t}</span>;
}

function WatchWindow() {
  const rows = WATCH.concat(Array(11).fill(null));
  const num = "overflow-hidden border-r-2 p-0 pr-[3px] text-right leading-none border-[#c0c0c0] ";
  return (
    <section className="flex h-0 grow flex-col">
      <header className="mr-[7px] flex h-[46px] shrink-0 items-center overflow-hidden border-r-[5px] border-t-2 border-[#8a8c90] bg-[#9da0a5] pr-[6px] text-white">
        <h2 className="-ml-[10px] flex-1 text-[22px] leading-none">연습</h2>
        <WinIcons grid />
      </header>
      <div className="mr-[7px] flex min-h-0 flex-1 border-b-[8px] border-l-2 border-r-[5px] border-[#a0a0a0] bg-[#dedede]">
        <div className="flex w-[88px] shrink-0 border-r-2 border-[#999] bg-white">
          <div className="w-[54px]" />
          <ScrollV width="w-[26px]" thumb="h-[480px]" />
        </div>
        <div className="flex min-h-0 min-w-0 flex-1 flex-col border-l-[4px] border-[#f5f5f5]">
          <div className="ml-[7px] mt-[4px] flex h-[36px] shrink-0 items-stretch">
            <Box className="w-[34px] justify-center bg-[#eee]">
              <svg viewBox="0 0 24 24" className="h-[24px] w-[24px]" fill="none" stroke="#444" strokeWidth="2"><path d="M3 2h20v20H9M3 2v5M3 6h20M14 6v16" /><path d="M1 9l8 7l-8 7z" fill="#444" stroke="none" /></svg>
            </Box>
            <Box className="ml-[2px] w-[37px] justify-center bg-white">03</Box>
            <Box className="ml-[3px] w-[163px] justify-between bg-white pl-[5px] text-[22px]">
              <select aria-label="관심그룹" className="h-full flex-1 appearance-none bg-transparent outline-none"><option>연습</option></select>
              <span className="flex h-full w-[26px] items-center justify-center border-l-2 border-[#bbb] bg-[#eee]"><Tri /></span>
            </Box>
            <Box className="ml-[3px] w-[60px] justify-center bg-[#f2f2f2] text-[22px]"><button>등록</button></Box>
            <Box className="ml-[3px] w-[49px] bg-[#f2f2f2]">
              <span className="mx-[9px] h-[11px] w-[11px] bg-[#555]" /><span className="flex h-full flex-1 items-center justify-center border-l-2 border-[#bbb]"><Tri className="scale-75" /></span>
            </Box>
            <Box className="ml-[2px] w-[95px] justify-center bg-white text-[22px]"><button className="whitespace-nowrap">코드등록</button></Box>
            <label className="ml-[3px] flex items-center gap-[4px] text-[22px]">
              <input type="checkbox" className="h-[23px] w-[23px] appearance-none border-2 border-[#999] bg-white" />예상
            </label>
            <div className="ml-[6px] flex"><Seg items={["1", "2", "3"]} active="1" width="w-[33px]" /></div>
            <Box className="w-[35px] justify-center bg-[#f2f2f2]">
              <svg viewBox="0 0 26 24" className="h-[24px] w-[26px]" fill="none" stroke="#555" strokeWidth="2"><path d="M2 2h17v18H2zM2 8h17M2 14h12M8 2v18M14 2v18" /><path d="M17 7l8 6l-8 7z" fill="#444" stroke="none" /></svg>
            </Box>
            <Box className="w-[34px] justify-center bg-[#f2f2f2]"><button aria-label="새로고침"><RotateCw size={24} color="#555" /></button></Box>
          </div>
          <div className="ml-[7px] mr-[2px] mt-[6px] flex h-[36px] shrink-0 items-stretch">
            {["1", "2", "3", "4", "5", "6", "7", "8", "9"].map((n, i) => (
              <button key={n} className={"mr-[2px] w-[61px] border-2 border-[#a5a5a5] " + (i === 2 ? "bg-[#4b83c8] text-white" : i < 2 ? "bg-[#f4f4f4] text-black" : "bg-[#f4f4f4] text-[#777]")}>{n}</button>
            ))}
            <button className="ml-auto w-[62px] border-2 border-[#a5a5a5] bg-[#f4f4f4] text-[22px]">필드</button>
            <button aria-label="이전" className="ml-[3px] flex w-[34px] items-center justify-center border-2 border-[#a5a5a5] bg-[#f4f4f4]"><svg viewBox="0 0 8 14" className="h-[13px] w-[8px]"><path d="M8 0v14L0 7z" fill="#444" /></svg></button>
            <button aria-label="다음" className="ml-[3px] flex w-[33px] items-center justify-center border-2 border-[#a5a5a5] bg-[#f4f4f4]"><svg viewBox="0 0 8 14" className="h-[13px] w-[8px]"><path d="M0 0v14l8-7z" fill="#444" /></svg></button>
          </div>
          <div className="mt-[6px] h-[4px] shrink-0 border-t-2 border-[#aaa] bg-[#f5f5f5]" />
          <div className="ml-[6px] mr-[2px] mt-[2px] flex min-h-0 flex-1 overflow-hidden border-2 border-[#9a9a9a] bg-white">
            <div className="min-w-0 flex-1 overflow-hidden">
              <table className="w-full table-fixed border-collapse text-[21px]">
                <colgroup>
                  <col className="w-[31px]" /><col className="w-[32px]" /><col className="w-[114px]" /><col className="w-[94px]" /><col className="w-[24px]" />
                  <col className="w-[81px]" /><col className="w-[84px]" /><col className="w-[126px]" /><col className="w-[125px]" />
                </colgroup>
                <thead>
                  <tr className="h-[30px] bg-[#dde5f3] text-[22px] [&>th]:border-r-2 [&>th]:border-[#c9d0de] [&>th]:p-0 [&>th]:font-normal [&>th]:leading-none">
                    <th>분</th><th>신</th><th>종목명</th><th>현재가</th><th colSpan={2}>대비</th><th>등락률</th><th>거래량</th><th>L일봉H</th>
                  </tr>
                </thead>
                <tbody>
                  {rows.map((r, i) => {
                    const bg = i === 0 ? "bg-[#c9d7e6]" : i % 2 ? "bg-[#eeeeee]" : "bg-white";
                    if (!r) {
                      return (
                        <tr key={i} className={"h-[32px] [&>td]:border-r-2 [&>td]:border-[#c0c0c0] [&>td]:p-0 " + bg}>
                          <td /><td /><td /><td /><td colSpan={2} /><td /><td /><td />
                        </tr>
                      );
                    }
                    const [tag, news, name, nc, price, dir, diff, pct, vol, kind] = r;
                    const c = dir === "u" ? vRed : dir === "d" ? vBlue : "";
                    return (
                      <tr key={i} className={"h-[31px] " + bg}>
                        <td className="border-r-2 border-[#c0c0c0] p-0">{tag && <Tag t={tag[0]} bg={tag[1]} />}</td>
                        <td className="border-r-2 border-[#c0c0c0] p-0">{news && <Tag t={news} bg="bg-[#4c8577]" />}</td>
                        <td className={"overflow-hidden whitespace-nowrap border-r-2 border-[#c0c0c0] p-0 pl-[4px] text-[22px] leading-none " + (nc === "g" ? "text-[#3c8a34]" : "")}>{name}</td>
                        <td className={num + c}>{price}</td>
                        <td className="p-0 pl-[5px]">
                          {dir && <svg viewBox="0 0 16 14" className="h-[14px] w-[16px]"><path d={dir === "u" ? "M8 0l8 14H0z" : "M8 14l8-14H0z"} fill={dir === "u" ? RED : "#2450c4"} /></svg>}
                        </td>
                        <td className={num + c}>{diff}</td>
                        <td className={num + c}>{pct}</td>
                        <td className={num}>{vol}</td>
                        <td className="border-r-2 border-[#c0c0c0] p-0"><MiniCandle kind={kind} /></td>
                      </tr>
                    );
                  })}
                </tbody>
              </table>
            </div>
            <ScrollV width="w-[30px]" thumb="h-[413px]" />
          </div>
        </div>
      </div>
    </section>
  );
}

/* ---------- shell ---------- */

const MENU = [
  ["주문", "주문"], ["주식", "종합"], ["키움", "현재"], ["관심", "종목"], ["조건", "검색"], ["종합", "검색", 1], ["종합", "차트", 1], ["날짜", "차트"], ["포토", "스탁", 1],
  ["미니", "주문"], ["호가", "주문"], ["매도", "주문"], ["일반", "주문"], ["월드", "티커"], ["채널", "K"], ["거래", "변동"], ["일별", "주가"], ["시장", "종합"],
  ["시간", "대별"], ["미체", "결", 1], ["미니", "업차", 1], ["특이", "종목", 1], ["전일", "등락", 1], ["종목", "매매", 1], ["금융", "투자"], ["종목", "별투"], ["외인", "기관"],
];

function MenuCell({ top, label, mark, className = "w-[77px] pl-[16px]" }) {
  return (
    <button className={"relative flex h-full shrink-0 flex-col justify-end border-r-2 border-[#b4bbca]/50 pb-[5px] text-left text-[22px] leading-[31px] " + className}>
      <span>{top}</span>
      <span>{label}</span>
      {mark && <span className="absolute bottom-[5px] right-[2px] border-b-[9px] border-l-[9px] border-b-[#5a6070] border-l-transparent" />}
    </button>
  );
}

const QUICK = [
  ["#f4dfa6", <path key="a" d="M9 0h19v13H9zM14 0v4h9V0M14 13V8h9v5" fill="#f0b93a" stroke="#a8741a" strokeWidth="2" />],
  ["#efece2", <path key="a" d="M11 2l5-2h8l3 5-4 7-6 2-6-5z" fill="#e8ae2e" />],
  ["#e0a741", <g key="a"><rect x="9" y="0" width="18" height="14" fill="#f4cf54" /><path d="M17 3h3v7h-3z" fill="#5b3c10" /></g>],
  ["#c9a3a0", <g key="a"><circle cx="18" cy="4" r="10" fill="#5a4bb0" /><circle cx="18" cy="4" r="4" fill="#1b1b40" /></g>],
  ["#e9e9ee", <path key="a" d="M11 0l7 9l4-4M20 12l2-2" stroke="#c04438" strokeWidth="2" fill="none" />],
  ["#d09a7c", <g key="a"><rect x="8" y="0" width="21" height="8" fill="#ee6a30" /><path d="M13 13h11v-3H13z" fill="#f4f4f4" /></g>],
  ["#5a5858", <g key="a"><rect x="8" y="2" width="9" height="11" fill="#f4f4f4" /><rect x="19" y="2" width="9" height="11" fill="#ef7a36" /></g>],
  ["#e1e5ee", <path key="a" d="M10 0v5h4l4 8l4-8h4V0" fill="none" stroke="#444c5c" strokeWidth="5" />],
];

function TopToolbar() {
  return (
    <nav className="flex h-[49px] shrink-0 items-stretch overflow-hidden bg-gradient-to-b from-[#727888] to-[#a5adc0] text-[#2b303c]">
      <div className="ml-[4px] flex h-[32px] w-[164px] items-start justify-between self-start rounded-b-[24px] border-b-2 border-[#8d93a2] bg-[#4b4847] px-[16px] pt-[1px] text-[24px] leading-none text-[#e9c23c]">
        0130
        <svg viewBox="0 0 12 9" className="ml-[14px] mt-[9px] h-[9px] w-[12px]"><path d="M0 0h12l-6 9z" fill="#ddd" /></svg>
        <button aria-label="검색"><Search size={22} color="#c9c9c9" /></button>
      </div>
      <div className="ml-[23px] flex w-[363px] flex-col">
        <div className="flex h-[20px] gap-[9px] px-[1px]">
          {QUICK.map(([bg, icon], i) => (
            <button key={i} aria-label={"바로가기 " + (i + 1)}>
              <svg viewBox="0 0 37 19" className="block h-[19px] w-[37px]">
                <path d="M0 0h37v12q0 6-7 6H7q-7 0-7-6z" fill={bg} />
                {icon}
              </svg>
            </button>
          ))}
        </div>
        <div className="mt-[5px] flex h-[18px] divide-x-2 divide-[#8f96a5] border-2 border-[#8f96a5] bg-[#b9bdc6] font-['DejaVu_Sans_Mono',monospace] text-[17px] leading-[14px]">
          {["S1", "S2", "S3", "S4", "", "", "", ""].map((s, i) => <button key={i} className="flex-1">{s}</button>)}
        </div>
      </div>
      <span className="ml-[8px] mt-[8px] h-0 w-0 border-y-[6px] border-r-[8px] border-y-transparent border-r-[#3b4150]" />
      <div className="ml-[5px] flex border-l-2 border-[#b4bbca]/50">
        <div className="flex items-start"><MenuCell top="주문" label="메뉴" className="w-[70px] border-r-0 pl-[13px]" /><Tri className="mr-[6px] mt-[8px]" /></div>
        <div className="flex items-start border-x-2 border-[#b4bbca]/50 font-medium text-black"><MenuCell top="주식" label="툴바" className="w-[70px] border-r-0 pl-[14px]" /><Tri className="mr-[6px] mt-[8px]" /></div>
        {MENU.map(([a, b, m], i) => <MenuCell key={i} top={a} label={b} mark={m} />)}
      </div>
      <div className="ml-auto flex w-[112px] shrink-0 flex-col justify-end overflow-hidden whitespace-nowrap border-l-2 border-[#b4bbca]/50 pb-[5px] pl-[13px] text-[21px] leading-[31px]">
        <span className="pl-[41px]">19/12/11</span>
        <span className="flex items-center gap-[14px]">
          <svg viewBox="0 0 26 26" className="h-[26px] w-[27px] shrink-0" fill="#c9ced8" stroke="#555c6a" strokeWidth="2"><circle cx="13" cy="13" r="11" /><path d="M13 6v8l4 4" /></svg>
          11:26:32
        </span>
      </div>
    </nav>
  );
}

const SIDE = [
  "M4 22L20 8v28z", "M2 8h20M2 20h20M2 32h20", "M20 8a12 12 0 0 0 0 24", "M4 8h18v24H4M8 20l8 6l8-12", "M3 6v30M3 34l8-12l5 6l6-12",
  "M2 30q10-2 20-22", "M2 20h20M6 14v14", "M2 30l8-12l6 6l6-8", "M2 26l7-8l6 5l7-9", "M2 28q8-12 20-14", "M4 14h14v14H4zM11 6v30", "M10 8v18l10 8",
  "M4 8h16M12 8v12", "M2 32h16V12", "M2 30q10-10 20-6", "M4 34l5-16l5 16M6 28h6", "M3 8h20M3 16h20M3 24h20M3 32h20", "M2 10h20M2 22l20-6M2 34h20",
];

function SideBar() {
  return (
    <aside className="flex w-[21px] shrink-0 flex-col overflow-hidden bg-[#e9e9e9]">
      <div className="mt-[15px] flex h-[936px] shrink-0 flex-col justify-between pl-[7px]">
        {SIDE.map((d, i) => (
          <button key={i} aria-label={"차트 도구 " + (i + 1)} className="h-[42px] w-[30px] border-2 border-[#9a9a9a] bg-[#f8f8f8]">
            <svg viewBox="0 0 26 42" className="h-[38px] w-[26px]" fill="none" stroke={i % 3 === 1 ? "#c04848" : "#26429c"} strokeWidth="2"><path d={d} /></svg>
          </button>
        ))}
      </div>
      <svg viewBox="0 0 21 628" className="mt-[8px] block h-[628px] w-[21px] shrink-0">
        <path d="M0 0h21v628H0z" fill="#fff" />
        <path d="M21 76Q2 92 2 107Q2 122 21 134z" fill="#111" />
        <path d="M21 84L12 98V116L21 126z" fill="#fff" />
        <path d="M0 148h21v58H0z" fill="#2f90d8" stroke="#111" strokeWidth="2" />
        <path d="M21 165Q10 172 8 178Q12 188 21 192" fill="#fff" stroke="#111" strokeWidth="3" />
        <path d="M8 212L21 222M8 212L18 246" stroke="#111" strokeWidth="3" fill="none" />
        <path d="M0 256h21v54H0z" fill="#f2bf38" />
        <path d="M21 264h-12v12l12 18" fill="#fff" stroke="#111" strokeWidth="3" />
        <path d="M21 316L9 332L21 352z" fill="#222" />
        <path d="M21 420L12 429L21 438" stroke="#333" strokeWidth="3" fill="none" />
        <path d="M10 478h11M12 484l4 30h5" stroke="#333" strokeWidth="3" fill="none" />
        <path d="M0 520h21v108H0z" fill="#4a4a4a" />
        <path d="M8 536h13v24H8z" fill="#fff" />
        <circle cx="18" cy="548" r="7" fill="#4a4a4a" />
        <path d="M11 580h10v34H11z" fill="#f4f4f4" />
        <path d="M13 588h8M13 596h8M13 604h8" stroke="#444" strokeWidth="2" />
      </svg>
      <div className="h-[26px] shrink-0 bg-[#4ab0f5]" />
      <div className="min-h-0 flex-1 border-b-2 border-l-2 border-black bg-[#f24a96]" />
    </aside>
  );
}

function OrderBar() {
  return (
    <div className="flex h-[46px] shrink-0 items-stretch border-b-2 border-[#f4f4f4] bg-[#e3e3e3] pb-[4px] text-[22px]">
      <Badge className="ml-[4px] h-[27px] w-[24px] self-center" />
      <div className="ml-[5px] flex h-[36px] self-center">
        <Box className="w-[139px] justify-between bg-white pl-[3px] pr-[5px] text-[21px]"><span>5074-7852</span><Tri /></Box>
        <Box className="w-[97px] bg-white"><input aria-label="비밀번호" type="password" className="w-full outline-none" /></Box>
        <Box className="ml-[3px] w-[141px] bg-white">
          <input aria-label="종목코드" defaultValue="008600" className="w-[79px] min-w-0 bg-transparent pl-[3px] text-[21px] outline-none" />
          <span className="flex w-[24px] items-center justify-center self-stretch border-l-2 border-[#bbb]"><Tri /></span>
          <button aria-label="검색" className="flex flex-1 items-center justify-center self-stretch border-l-2 border-[#bbb]"><Search size={22} color="#888" /></button>
        </Box>
        <Box className="w-[193px] bg-white">
          <span className="flex h-full w-[30px] items-center justify-center bg-[#8e9c3a] text-[21px] text-white">신</span>
          <span className="flex h-full w-[50px] items-center justify-center bg-[#d6d6d6] text-[21px]">40%</span>
          <span className="ml-[4px]">월비스</span>
          <Corner />
        </Box>
      </div>
      <div className="ml-[8px] flex w-[523px] items-center gap-[21px] bg-[#f8dad0] pl-[6px] pb-[4px]"><span>보통</span><span>현재가</span><span className="ml-[7px]">현100%</span></div>
      <div className="ml-[2px] flex w-[522px] items-center gap-[21px] bg-[#cde2fb] pl-[7px] pb-[4px]"><span>보통</span><span>현재가</span><span className="ml-[9px]">100%</span></div>
      <div className="flex w-[523px] items-center gap-[30px] bg-[#e0e4c5] pl-[55px] pb-[4px]"><span>현재가</span><span>잔량전부</span></div>
      <div className="flex w-[522px] items-center bg-[#eddfc5] pl-[126px] pb-[4px]">잔량전부</div>
      <div className="ml-auto mr-[22px] self-center"><Pin fill="#555" /></div>
    </div>
  );
}

function TabBar() {
  const tabs = [["주식호가", "w-[188px]"], ["관심종목", "w-[192px]"], ["키움종합차트", "w-[190px]"], ["키움종합차트", "w-[196px]"]];
  return (
    <div className="flex h-[50px] shrink-0 items-stretch border-t-2 border-[#f2f2f2] bg-[#ebebeb] pb-[3px] text-[22px] text-[#333]" role="tablist">
      {tabs.map(([t, w], i) => (
        <button key={i} role="tab" className={"flex items-center border-r-2 " + w + (i === 2 ? " border-[#eee] bg-[#c6c6c6]" : i === 3 ? " border-transparent" : " border-[#f8f8f8]")}>
          <Badge className="ml-[4px] h-[27px] w-[24px]" />
          <span className="ml-[10px] whitespace-nowrap">{t}</span>
        </button>
      ))}
    </div>
  );
}

function Up() {
  return <svg viewBox="0 0 16 16" className="h-[15px] w-[16px] shrink-0"><path d="M8 0l8 16H0z" fill="#d83a2c" /></svg>;
}

function StatusBar() {
  const r = "text-[#cc3f3f]";
  const b = "text-[#2c4fc4]";
  const tags = [["거", "bg-[#d8461f]", "16", b], ["코", "bg-[#f09a28]", "245", r], ["선", "bg-[#3aa38c]", "565", b], ["콜", "bg-[#7a90cc]", "5", r], ["풋", "bg-[#e0458e]", "29", r]];
  return (
    <footer className="flex h-[33px] shrink-0 items-center overflow-hidden whitespace-nowrap border-t-2 border-[#c9d3ea] bg-[#dbe6ff] text-[21px] text-[#3a4150] [&>span]:shrink-0">
      <span className="flex h-full w-[131px] items-center bg-[#c8d8fb] pl-[12px]">KOSPI200</span>
      <span className={"ml-[20px] w-[90px] " + r}>280.21</span><Up />
      <span className={"ml-[13px] w-[66px] " + r}>0.90</span>
      <span className={"w-[77px] " + r}>0.32%</span>
      <span className="text-black">23,807</span>
      <Tri className="ml-[153px]" />
      <span className="ml-[18px] flex h-full w-[133px] items-center border-l-2 border-[#f0f4ff] bg-[#c8d8fb] pl-[12px]">KOSPI 종합</span>
      <span className={"ml-[20px] w-[110px] " + r}>2,104.49</span><Up />
      <span className={"ml-[13px] w-[66px] " + r}>6.49</span>
      <span className={"w-[77px] " + r}>0.31%</span>
      <span className="text-black">288,260</span>
      <Tri className="ml-[118px]" />
      <span className="ml-[18px] flex h-full items-center border-l-2 border-[#f0f4ff] pl-[12px] text-[22px]">무소르그스키의 &#39;전람회의 그림&#39;, 드라마가 되다</span>
      <span className="ml-auto">11:26:32</span>
      <span className="ml-[24px] text-[22px]">연합뉴스</span>
      <div className="ml-[47px] flex h-full shrink-0 flex-col overflow-hidden">
        <div className="flex h-[28px] shrink-0 items-center">
          <span className="flex h-full w-[84px] items-center justify-center bg-[#c8d8fb] text-[22px] text-black">개인</span>
          {tags.map(([t, bg, v, c], i) => (
            <React.Fragment key={t}>
              <span className={"flex h-[26px] w-[19px] items-center justify-center overflow-hidden text-[20px] leading-none text-white " + bg}>{t}</span>
              <span className={(i === 0 ? "w-[67px]" : "w-[69px]") + " pr-[2px] text-right " + c}>{v}</span>
            </React.Fragment>
          ))}
        </div>
        <div className="flex h-[28px] shrink-0 items-start text-black">
          <span className="w-[84px] text-center text-[22px] leading-[24px]">외국인</span>
          {["191", "5", "207", "0", "22"].map((v, i) => <span key={i} className={"w-[88px] text-right leading-[24px] " + (i === 2 ? r : b)}>{v}</span>)}
        </div>
      </div>
      <span className="ml-[5px] flex h-full w-[131px] items-center border-l-2 border-[#f0f4ff] pl-[64px] text-[22px]">뉴스</span>
    </footer>
  );
}

export default function App() {
  return (
    <div className={"relative flex min-h-screen flex-col overflow-hidden bg-[#85878b] text-[21px] leading-normal text-[#111] " + MONO}>
      <div className="flex h-[54px] shrink-0 items-start justify-between overflow-hidden bg-black text-white">
        <h1 className="ml-[8px] whitespace-nowrap font-['Noto_Sans_CJK_KR',sans-serif] text-[51px] leading-[34px] text-[#eee]">[주식] 스윙매매 기술적분석과 매매시나리오 검토 그리고 매수까지 #11</h1>
        <div className="flex gap-[48px]">
          <button aria-label="나중에 볼 동영상">
            <svg viewBox="0 10 62 50" className="h-[50px] w-[62px]"><circle cx="31" cy="30" r="30" fill="#e6e6e6" /><path d="M29 12v22l13 9" fill="none" stroke="#000" strokeWidth="5" /></svg>
          </button>
          <button aria-label="공유">
            <svg viewBox="0 0 62 46" className="h-[46px] w-[62px]"><path d="M36 0L60 20L36 42V29Q14 28 0 45Q3 14 36 10z" fill="#e6e6e6" /></svg>
          </button>
        </div>
      </div>
      <TopToolbar />
      <main className="flex flex-1">
        <div className="flex min-w-0 flex-1 flex-col">
          <ChartWindow daily />
          <div className="h-[6px] bg-[#8c8e92]" />
          <ChartWindow />
        </div>
        <div className="flex w-[858px] shrink-0 flex-col bg-[#4b4e58]">
          <QuoteWindow />
          <WatchWindow />
        </div>
        <SideBar />
      </main>
      <OrderBar />
      <TabBar />
      <StatusBar />
      <div className="pointer-events-none absolute inset-x-0 bottom-0 h-[724px] bg-[linear-gradient(to_bottom,transparent_0%,rgba(0,0,0,0.11)_41%,rgba(0,0,0,0.2)_69%,rgba(0,0,0,0.27)_85%,rgba(0,0,0,0.35)_100%)]" />
      <div className="absolute bottom-[17px] right-[5px] flex h-[79px] w-[78px] flex-col items-center justify-center rounded-full bg-[#5a9bcd] font-['Noto_Sans_CJK_KR',sans-serif] text-[29px] font-black leading-[28px] text-white">
        <span>구독</span>
        <span>클릭</span>
      </div>
    </div>
  );
}
